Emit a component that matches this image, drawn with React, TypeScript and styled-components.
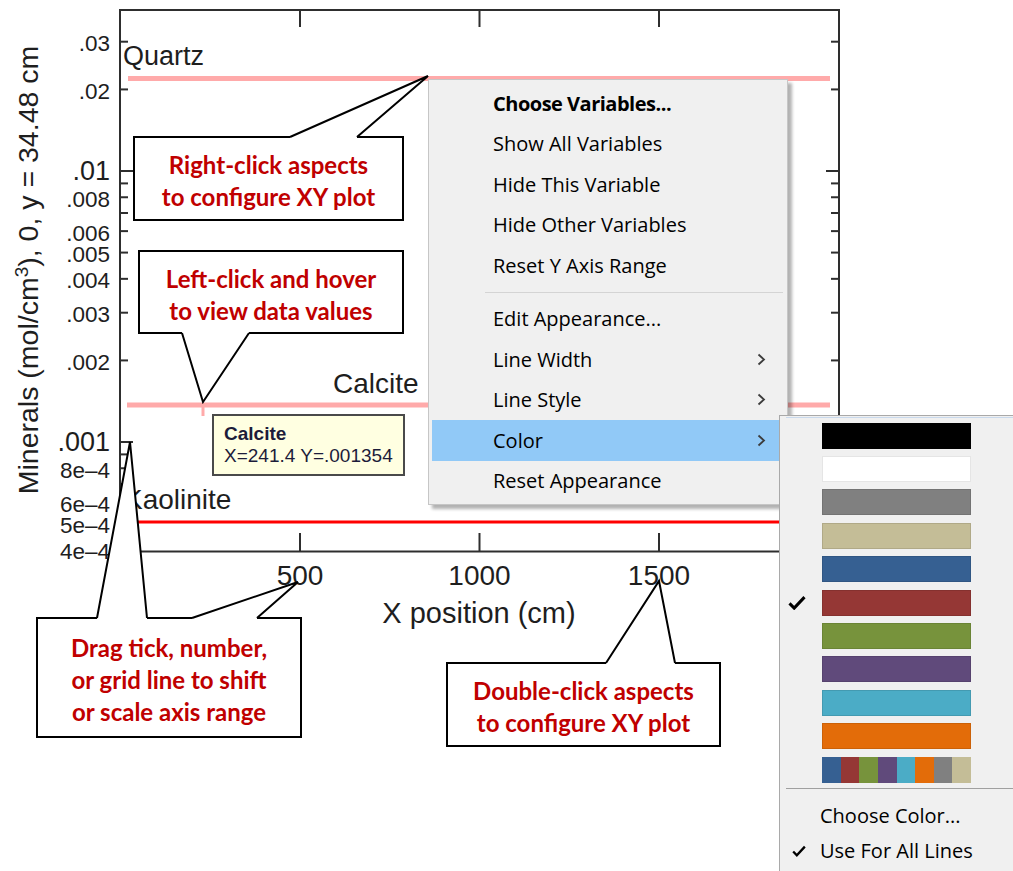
import styled, {createGlobalStyle} from "styled-components";
import {ReactNode} from "react";

const GlobalStyle = createGlobalStyle`
    html, body {
        margin: 0;
        padding: 0;
        background: #fff;
        overflow: hidden;
    }
`

const Canvas = styled.div`
    position: relative;
    width: 1013px;
    height: 871px;
    overflow: hidden;
    background: #fff;
    font-family: 'Liberation Sans', Arial, sans-serif;
`

// ---------- chart ----------

const ChartSvg = styled.svg`
    position: absolute;
    left: 0;
    top: 0;
    width: 1013px;
    height: 871px;
    font-family: 'Liberation Sans', Arial, sans-serif;

    text {
        fill: #1e1e1e;
    }
`

const xPx = (cm: number) => 120.5 + cm * 0.359
const yPx = (v: number) => 171 - 271 * Math.log10(v / 0.01)

const yTicks = [0.03, 0.02, 0.01, 0.009, 0.008, 0.007, 0.006, 0.005, 0.004, 0.003, 0.002,
    0.001, 9e-4, 8e-4, 7e-4, 6e-4, 5e-4, 4e-4]
const majorTicks = [0.01, 0.001]

const yLabels = [
    {v: 0.03, text: '.03'},
    {v: 0.02, text: '.02'},
    {v: 0.01, text: '.01'},
    {v: 0.008, text: '.008'},
    {v: 0.006, text: '.006'},
    {v: 0.005, text: '.005'},
    {v: 0.004, text: '.004'},
    {v: 0.003, text: '.003'},
    {v: 0.002, text: '.002'},
    {v: 0.001, text: '.001'},
    {v: 8e-4, text: '8e–4'},
    {v: 6e-4, text: '6e–4'},
    {v: 5e-4, text: '5e–4'},
    {v: 4e-4, text: '4e–4'},
]

const xTicks = [500, 1000, 1500]

const PINK = '#ffaaaa'

const Chart = () => (
    <ChartSvg viewBox="0 0 1013 871">
        {/* frame */}
        <rect x={120} y={10} width={719} height={541.5} fill="none" stroke="#2e2e2e" strokeWidth={2}/>

        {yTicks.map(v => {
            const y = yPx(v)
            const len = majorTicks.includes(v) ? 13 : 8
            return (
                <g key={v} stroke="#2e2e2e" strokeWidth={2}>
                    <line x1={120} y1={y} x2={120 + len} y2={y}/>
                    <line x1={839} y1={y} x2={839 - len} y2={y}/>
                </g>
            )
        })}
        {xTicks.map(cm => (
            <g key={cm} stroke="#2e2e2e" strokeWidth={2}>
                <line x1={xPx(cm)} y1={10} x2={xPx(cm)} y2={27}/>
                <line x1={xPx(cm)} y1={551} x2={xPx(cm)} y2={533}/>
            </g>
        ))}

        {/* data lines */}
        <line x1={128} y1={78.5} x2={830} y2={78.5} stroke={PINK} strokeWidth={5}/>
        <line x1={127} y1={405} x2={830} y2={405} stroke={PINK} strokeWidth={5}/>
        <line x1={203} y1={405} x2={203} y2={416} stroke={PINK} strokeWidth={3}/>
        <line x1={128} y1={522} x2={838} y2={522} stroke="#ff0000" strokeWidth={3}/>

        <text x={123} y={65} fontSize={27}>Quartz</text>
        <text x={333} y={393} fontSize={28}>Calcite</text>
        <text x={124} y={509} fontSize={28}>Kaolinite</text>

        {yLabels.map(({v, text}) => {
            const big = majorTicks.includes(v)
            return (
                <text key={text} x={110} y={yPx(v) + (big ? 0 : 2)} textAnchor="end"
                      dominantBaseline="central" fontSize={big ? 27 : 22.5}>
                    {text}
                </text>
            )
        })}
        {xTicks.map(cm => (
            <text key={cm} x={xPx(cm)} y={585} textAnchor="middle" fontSize={28}>{cm}</text>
        ))}

        <text x={479} y={623} textAnchor="middle" fontSize={29}>X position (cm)</text>
        <text transform="translate(38 270) rotate(-90)" textAnchor="middle" fontSize={28.5}>
            Minerals (mol/cm<tspan dy={-10} fontSize={19}>3</tspan><tspan dy={10}>), 0, y = 34.48 cm</tspan>
        </text>
    </ChartSvg>
)

// ---------- hover tooltip ----------

const Tooltip = styled.div`
    position: absolute;
    left: 212px;
    top: 414px;
    width: 193px;
    height: 62px;
    box-sizing: border-box;
    padding: 7px 10px;
    background: #ffffe1;
    border: 2px solid #4a4a4a;
    font-family: 'Liberation Sans', Arial, sans-serif;
    font-size: 19px;
    line-height: 21.5px;
    color: #1c1c3a;
`

const TooltipTitle = styled.div`
    font-weight: 700;
`

// ---------- callouts ----------

interface IPointer {
    a: number
    b: number
    tip: [number, number]
    edge: 'top' | 'bottom'
}

const CalloutBox = styled.div<{ $x: number, $y: number, $w: number, $h: number }>`
    position: absolute;
    left: ${p => p.$x}px;
    top: ${p => p.$y}px;
    width: ${p => p.$w}px;
    height: ${p => p.$h}px;
    box-sizing: border-box;
    border: 2px solid #000;
    background: #fff;
    display: flex;
    align-items: center;
    justify-content: center;
    text-align: center;
    padding-top: 5px;
    font-family: Lato, 'Liberation Sans', sans-serif;
    font-weight: 700;
    font-size: 24px;
    line-height: 32px;
    color: #c00000;
`

const PointerSvg = styled.svg`
    position: absolute;
    left: -2px;
    top: -2px;
    width: 1px;
    height: 1px;
    overflow: visible;
`

interface ICallout {
    x: number
    y: number
    w: number
    h: number
    pointers: IPointer[]
    children: ReactNode
}

const Callout = ({x, y, w, h, pointers, children}: ICallout) => (
    <CalloutBox $x={x} $y={y} $w={w} $h={h}>
        <span>{children}</span>
        <PointerSvg>
            {pointers.map((p, i) => {
                const ax = p.a - x
                const bx = p.b - x
                const tx = p.tip[0] - x
                const ty = p.tip[1] - y
                const mid = p.edge === 'top' ? 1 : h - 1
                const inner = p.edge === 'top' ? 2.6 : h - 2.6
                return (
                    <g key={i}>
                        <polygon
                            points={`${ax},${inner} ${ax},${mid} ${tx},${ty} ${bx},${mid} ${bx},${inner}`}
                            fill="#fff"
                        />
                        <polyline
                            points={`${ax},${mid} ${tx},${ty} ${bx},${mid}`}
                            fill="none"
                            stroke="#000"
                            strokeWidth={2}
                        />
                    </g>
                )
            })}
        </PointerSvg>
    </CalloutBox>
)

// ---------- context menu ----------

const ContextMenu = styled.div`
    position: absolute;
    left: 428px;
    top: 79px;
    width: 358px;
    padding: 3px 0;
    background: #f0f0f0;
    border: 1px solid #c6c6c6;
    box-shadow: 4px 4px 3px rgba(0, 0, 0, 0.3);
    display: flex;
    flex-direction: column;
    font-family: 'Open Sans', 'Noto Sans', sans-serif;
    font-size: 20px;
    color: #000;
`

const MenuItem = styled.div<{ $bold?: boolean, $active?: boolean }>`
    height: 40.5px;
    margin: 0 3px;
    padding: 0 18px 0 61px;
    display: flex;
    align-items: center;
    justify-content: space-between;
    font-weight: ${p => p.$bold ? 700 : 400};
    letter-spacing: ${p => p.$bold ? '-0.5px' : '0'};
    background: ${p => p.$active ? '#91c9f7' : 'transparent'};
`

const MenuSeparator = styled.div`
    height: 1px;
    margin: 6px 4px 6px 56px;
    background: #d4d4d4;
`

const Chevron = () => (
    <svg width="9" height="13" viewBox="0 0 9 13">
        <polyline points="1.5,1.5 7,6.5 1.5,11.5" fill="none" stroke="#3c3c3c" strokeWidth={1.8}/>
    </svg>
)

// ---------- color submenu ----------

const SubMenu = styled.div`
    position: absolute;
    left: 779px;
    top: 415px;
    width: 260px;
    height: 480px;
    background: #f0f0f0;
    border: 1px solid #a9a9a9;
    font-family: 'Open Sans', 'Noto Sans', sans-serif;
    font-size: 20px;
    color: #000;
`

const HoverTrace = styled.div`
    height: 1px;
    margin: 1px 12px 1px 6px;
    background: #c9d9ec;
`

const SwatchRow = styled.div`
    height: 33.4px;
    display: flex;
    align-items: center;
`

const CheckCell = styled.div<{ $pad: number }>`
    width: 42px;
    flex-shrink: 0;
    box-sizing: border-box;
    padding-left: ${p => p.$pad}px;
    display: flex;
    align-items: center;
`

const Swatch = styled.div<{ $color: string }>`
    width: 149px;
    height: 26px;
    background: ${p => p.$color};
    box-shadow: inset 0 0 0 1px rgba(0, 0, 0, 0.1);
`

const MultiSwatch = styled.div`
    width: 149px;
    height: 26px;
    display: flex;
`

const Segment = styled.div<{ $color: string }>`
    flex: 1;
    background: ${p => p.$color};
`

const SubSeparator = styled.div`
    height: 1px;
    margin: 2px 0 9px 6px;
    background: #a0a0a0;
`

const SubItem = styled.div`
    height: 35px;
    display: flex;
    align-items: center;
`

const SubCheckCell = styled(CheckCell)`
    width: 40px;
`

const CheckMark = ({size}: { size: number }) => (
    <svg width={size} height={size * 0.85} viewBox="0 0 18 15">
        <path d="M1.5 8.2 L6.2 13 L16.5 2" fill="none" stroke="#000" strokeWidth={3}/>
    </svg>
)

const swatches = ['#000000', '#ffffff', '#808080', '#c4bd97', '#366092', '#953735',
    '#77933c', '#604a7b', '#4bacc6', '#e36c09']
const selectedSwatch = '#953735'
const palette = ['#366092', '#953735', '#77933c', '#604a7b', '#4bacc6', '#e36c09', '#808080', '#c4bd97']

const menuTop = ['Show All Variables', 'Hide This Variable', 'Hide Other Variables', 'Reset Y Axis Range']

export default function App() {
    return (
        <>
            <GlobalStyle/>
            <Canvas>
                <Chart/>

                <Tooltip>
                    <TooltipTitle>Calcite</TooltipTitle>
                    <div>X=241.4 Y=.001354</div>
                </Tooltip>

                <Callout x={133} y={136} w={271} h={85}
                         pointers={[{a: 290, b: 357, tip: [428, 76], edge: 'top'}]}>
                    Right-click aspects<br/>to configure XY plot
                </Callout>
                <Callout x={138} y={250} w={266} h={84}
                         pointers={[{a: 182, b: 249, tip: [203, 402], edge: 'bottom'}]}>
                    Left-click and hover<br/>to view data values
                </Callout>
                <Callout x={36} y={617} w={266} h={121}
                         pointers={[
                             {a: 97, b: 147, tip: [130, 442], edge: 'top'},
                             {a: 192, b: 257, tip: [298, 582], edge: 'top'},
                         ]}>
                    Drag tick, number,<br/>or grid line to shift<br/>or scale axis range
                </Callout>
                <Callout x={446} y={662} w={275} h={85}
                         pointers={[{a: 606, b: 675, tip: [659, 581], edge: 'top'}]}>
                    Double-click aspects<br/>to configure XY plot
                </Callout>

                <ContextMenu>
                    <MenuItem $bold>Choose Variables...</MenuItem>
                    {menuTop.map(label => <MenuItem key={label}>{label}</MenuItem>)}
                    <MenuSeparator/>
                    <MenuItem>Edit Appearance...</MenuItem>
                    <MenuItem>Line Width<Chevron/></MenuItem>
                    <MenuItem>Line Style<Chevron/></MenuItem>
                    <MenuItem $active>Color<Chevron/></MenuItem>
                    <MenuItem>Reset Appearance</MenuItem>
                </ContextMenu>

                <SubMenu>
                    <HoverTrace/>
                    {swatches.map(color => (
                        <SwatchRow key={color}>
                            <CheckCell $pad={8}>
                                {color === selectedSwatch && <CheckMark size={18}/>}
                            </CheckCell>
                            <Swatch $color={color}/>
                        </SwatchRow>
                    ))}
                    <SwatchRow>
                        <CheckCell $pad={8}/>
                        <MultiSwatch>
                            {palette.map(color => <Segment key={color} $color={color}/>)}
                        </MultiSwatch>
                    </SwatchRow>
                    <SubSeparator/>
                    <SubItem>
                        <SubCheckCell $pad={12}/>
                        Choose Color...
                    </SubItem>
                    <SubItem>
                        <SubCheckCell $pad={12}><CheckMark size={14}/></SubCheckCell>
                        Use For All Lines
                    </SubItem>
                </SubMenu>
            </Canvas>
        </>
    )
}
